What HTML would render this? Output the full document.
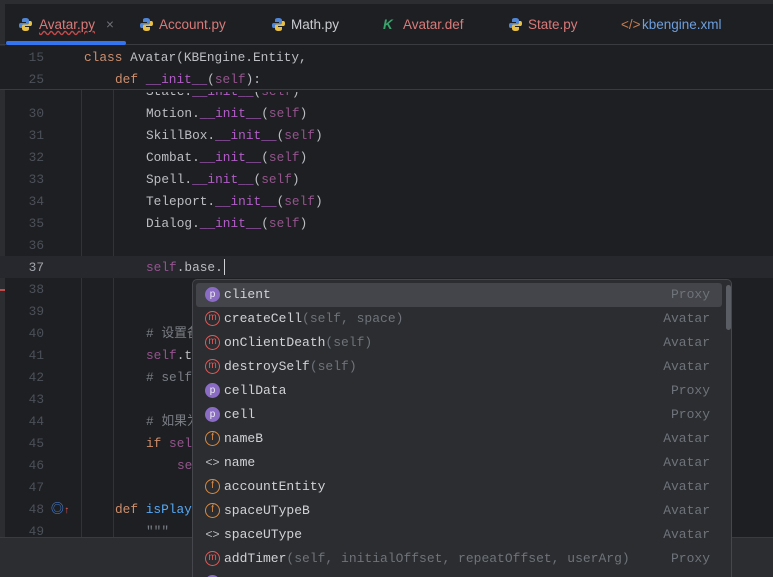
<!DOCTYPE html>
<html style="width:773px;height:577px;overflow:hidden"><head><meta charset="utf-8"><style>
*{margin:0;padding:0;box-sizing:border-box}
body{width:773px;height:577px;background:#1e1f22;overflow:hidden;position:relative;font-family:"Liberation Mono","Noto Sans CJK SC",monospace;font-size:12.8px;color:#bcbec4}
.abs{position:absolute}
.top{left:0;top:0;width:773px;height:4px;background:#2b2d30}
.tabs{left:0;top:4px;width:773px;height:41px;border-bottom:1px solid #393b40;font-family:"Liberation Sans",sans-serif;font-size:13.5px}
.tab{position:absolute;top:13px;white-space:nowrap}
.py{position:absolute;top:13px;width:15px;height:15px}
.ln{position:absolute;left:0;width:44px;text-align:right;color:#4b5059}
.code{position:absolute;white-space:pre}
.k{color:#cf8e6d}.s{color:#94558d}.m{color:#b15ec6}.c{color:#7a7e85}.f{color:#56a8f5}
.row{position:absolute;left:3px;width:526px;height:24px;line-height:24px;font-size:13px}
.ic{position:absolute;left:9px;top:4px;width:15px;height:15px;border-radius:50%;font-size:10px;line-height:12px;text-align:center;font-family:"Liberation Sans",sans-serif}
.im{border:1.5px solid #e05a5a;color:#e05a5a}
.if{border:1.5px solid #d98a45;color:#d98a45}
.ip{background:#8a6cc4;color:#eee;line-height:15px}
.ia{color:#bcbec4;font-size:12px;border-radius:0;line-height:15px}
.nm{position:absolute;left:28px;color:#d0d2d6}
.pa{color:#6f737a}
.ty{position:absolute;right:12px;color:#6f737a}
</style></head><body>
<svg width="0" height="0" style="position:absolute"><defs><g id="pyi"><path d="M7 1C4 1 4 2.5 4 3.5V5h4v1H2.5C1 6 1 8 1 8.5S1 11 2.5 11H4V9.5C4 8 5 7.5 6 7.5h3.5C10.5 7.5 11 7 11 6V3.5C11 2 10 1 7 1z" fill="#4f86d8"/><path d="M8 14c3 0 3-1.5 3-2.5V10H7V9h5.5C14 9 14 7 14 6.5S14 4 12.5 4H11v1.5C11 7 10 7.5 9 7.5H5.5C4.5 7.5 4 8 4 9v2.5C4 13 5 14 8 14z" fill="#e8c048"/></g></defs></svg>
<div class="abs top"></div>
<div class="abs" style="left:0;top:4px;width:5px;height:533px;background:#2b2d30"></div>
<div class="abs tabs">
<svg class="py" style="left:18px" viewBox="0 0 15 15"><use href="#pyi"/></svg>
<div class="tab" style="left:39px;color:#d97a7a;text-decoration:underline wavy #c74a4a">Avatar.py</div>
<div class="tab" style="left:106px;color:#6f737a">×</div>
<svg class="py" style="left:139px" viewBox="0 0 15 15"><use href="#pyi"/></svg>
<div class="tab" style="left:159px;color:#d97a7a">Account.py</div>
<svg class="py" style="left:271px" viewBox="0 0 15 15"><use href="#pyi"/></svg>
<div class="tab" style="left:291px;color:#c9ccd2">Math.py</div>
<div class="tab" style="left:383px;color:#3aa46b;font-weight:bold;font-style:italic">K</div>
<div class="tab" style="left:403px;color:#d97a7a">Avatar.def</div>
<svg class="py" style="left:508px" viewBox="0 0 15 15"><use href="#pyi"/></svg>
<div class="tab" style="left:528px;color:#d97a7a">State.py</div>
<div class="tab" style="left:621px;color:#c77d50">&lt;/&gt;</div>
<div class="tab" style="left:642px;color:#6e9fdd">kbengine.xml</div>
<div class="abs" style="left:6px;top:37px;width:120px;height:4px;background:#3574f0;border-radius:2px"></div>
</div>
<div class="abs" style="left:81px;top:90px;width:1px;height:447px;background:#313338"></div>
<div class="abs" style="left:113px;top:90px;width:1px;height:447px;background:#313338"></div>
<div class="abs" style="left:0;top:256px;width:773px;height:22px;background:#26282e"></div>
<div class="abs" style="left:0;top:289px;width:5px;height:2px;background:#c74a4a"></div>
<div class="abs" style="left:0;top:46px;width:773px;height:44px;background:#1e1f22;border-bottom:1px solid #393b40"></div>
<div style="position:absolute;left:0;top:47px;line-height:22px">
<div class="ln" style="top:0">15</div><div class="code" style="left:84px;top:0"><span class="k">class</span> Avatar(KBEngine.Entity,</div>
<div class="ln" style="top:22px">25</div><div class="code" style="left:115px;top:22px"><span class="k">def</span> <span class="m">__init__</span>(<span class="s">self</span>):</div>
</div>
<div style="position:absolute;left:0;top:103px;line-height:22px">
<div class="code" style="left:146px;top:-22px;clip-path:inset(11px 0 0 0)">State.<span class="m">__init__</span>(<span class="s">self</span>)</div>
<div class="ln" style="top:0">30</div><div class="code" style="left:146px;top:0">Motion.<span class="m">__init__</span>(<span class="s">self</span>)</div>
<div class="ln" style="top:22px">31</div><div class="code" style="left:146px;top:22px">SkillBox.<span class="m">__init__</span>(<span class="s">self</span>)</div>
<div class="ln" style="top:44px">32</div><div class="code" style="left:146px;top:44px">Combat.<span class="m">__init__</span>(<span class="s">self</span>)</div>
<div class="ln" style="top:66px">33</div><div class="code" style="left:146px;top:66px">Spell.<span class="m">__init__</span>(<span class="s">self</span>)</div>
<div class="ln" style="top:88px">34</div><div class="code" style="left:146px;top:88px">Teleport.<span class="m">__init__</span>(<span class="s">self</span>)</div>
<div class="ln" style="top:110px">35</div><div class="code" style="left:146px;top:110px">Dialog.<span class="m">__init__</span>(<span class="s">self</span>)</div>
<div class="ln" style="top:132px">36</div>
<div class="ln" style="top:154px;color:#a1a3ab">37</div><div class="code" style="left:146px;top:154px"><span class="s">self</span>.base.</div>
<div class="ln" style="top:176px">38</div>
<div class="ln" style="top:198px">39</div>
<div class="ln" style="top:220px">40</div><div class="code c" style="left:146px;top:220px"># 设置备</div>
<div class="ln" style="top:242px">41</div><div class="code" style="left:146px;top:242px"><span class="s">self</span>.t</div>
<div class="ln" style="top:264px">42</div><div class="code c" style="left:146px;top:264px"># self</div>
<div class="ln" style="top:286px">43</div>
<div class="ln" style="top:308px">44</div><div class="code c" style="left:146px;top:308px"># 如果为</div>
<div class="ln" style="top:330px">45</div><div class="code" style="left:146px;top:330px"><span class="k">if</span> <span class="s">sel</span></div>
<div class="ln" style="top:352px">46</div><div class="code s" style="left:177px;top:352px">se</div>
<div class="ln" style="top:374px">47</div>
<div class="ln" style="top:396px">48</div><div class="code" style="left:51px;top:396px;color:#4d8ef0">◎<span style="color:#e05a5a;font-size:10px">↑</span></div><div class="code" style="left:115px;top:396px"><span class="k">def</span> <span class="f">isPlay</span></div>
<div class="ln" style="top:418px">49</div><div class="code c" style="left:146px;top:418px">"""</div>
</div>
<div class="abs" style="left:224px;top:259px;width:1px;height:16px;background:#ced0d6"></div>
<div class="abs" style="left:0;top:537px;width:773px;height:40px;background:#2b2d30;border-top:1px solid #393b40"></div>
<div class="abs" style="left:192px;top:279px;width:540px;height:298px;background:#2b2d30;border:1px solid #45474c;border-bottom:none;border-radius:5px 5px 0 0;overflow:hidden">
<div class="abs" style="left:3px;top:3px;width:526px;height:24px;background:#43454a;border-radius:3px"></div>
<div class="abs" style="left:533px;top:5px;width:5px;height:45px;background:#5a5d63;border-radius:3px"></div>
<div class="row" style="top:3px"><span class="ic ip">p</span><span class="nm">client</span><span class="ty">Proxy</span></div>
<div class="row" style="top:27px"><span class="ic im">m</span><span class="nm">createCell<span class="pa">(self, space)</span></span><span class="ty">Avatar</span></div>
<div class="row" style="top:51px"><span class="ic im">m</span><span class="nm">onClientDeath<span class="pa">(self)</span></span><span class="ty">Avatar</span></div>
<div class="row" style="top:75px"><span class="ic im">m</span><span class="nm">destroySelf<span class="pa">(self)</span></span><span class="ty">Avatar</span></div>
<div class="row" style="top:99px"><span class="ic ip">p</span><span class="nm">cellData</span><span class="ty">Proxy</span></div>
<div class="row" style="top:123px"><span class="ic ip">p</span><span class="nm">cell</span><span class="ty">Proxy</span></div>
<div class="row" style="top:147px"><span class="ic if">f</span><span class="nm">nameB</span><span class="ty">Avatar</span></div>
<div class="row" style="top:171px"><span class="ic ia">&lt;&gt;</span><span class="nm">name</span><span class="ty">Avatar</span></div>
<div class="row" style="top:195px"><span class="ic if">f</span><span class="nm">accountEntity</span><span class="ty">Avatar</span></div>
<div class="row" style="top:219px"><span class="ic if">f</span><span class="nm">spaceUTypeB</span><span class="ty">Avatar</span></div>
<div class="row" style="top:243px"><span class="ic ia">&lt;&gt;</span><span class="nm">spaceUType</span><span class="ty">Avatar</span></div>
<div class="row" style="top:267px"><span class="ic im">m</span><span class="nm">addTimer<span class="pa">(self, initialOffset, repeatOffset, userArg)</span></span><span class="ty">Proxy</span></div>
<div class="row" style="top:291px"><span class="ic ip">p</span></div>
</div>
</body></html>
